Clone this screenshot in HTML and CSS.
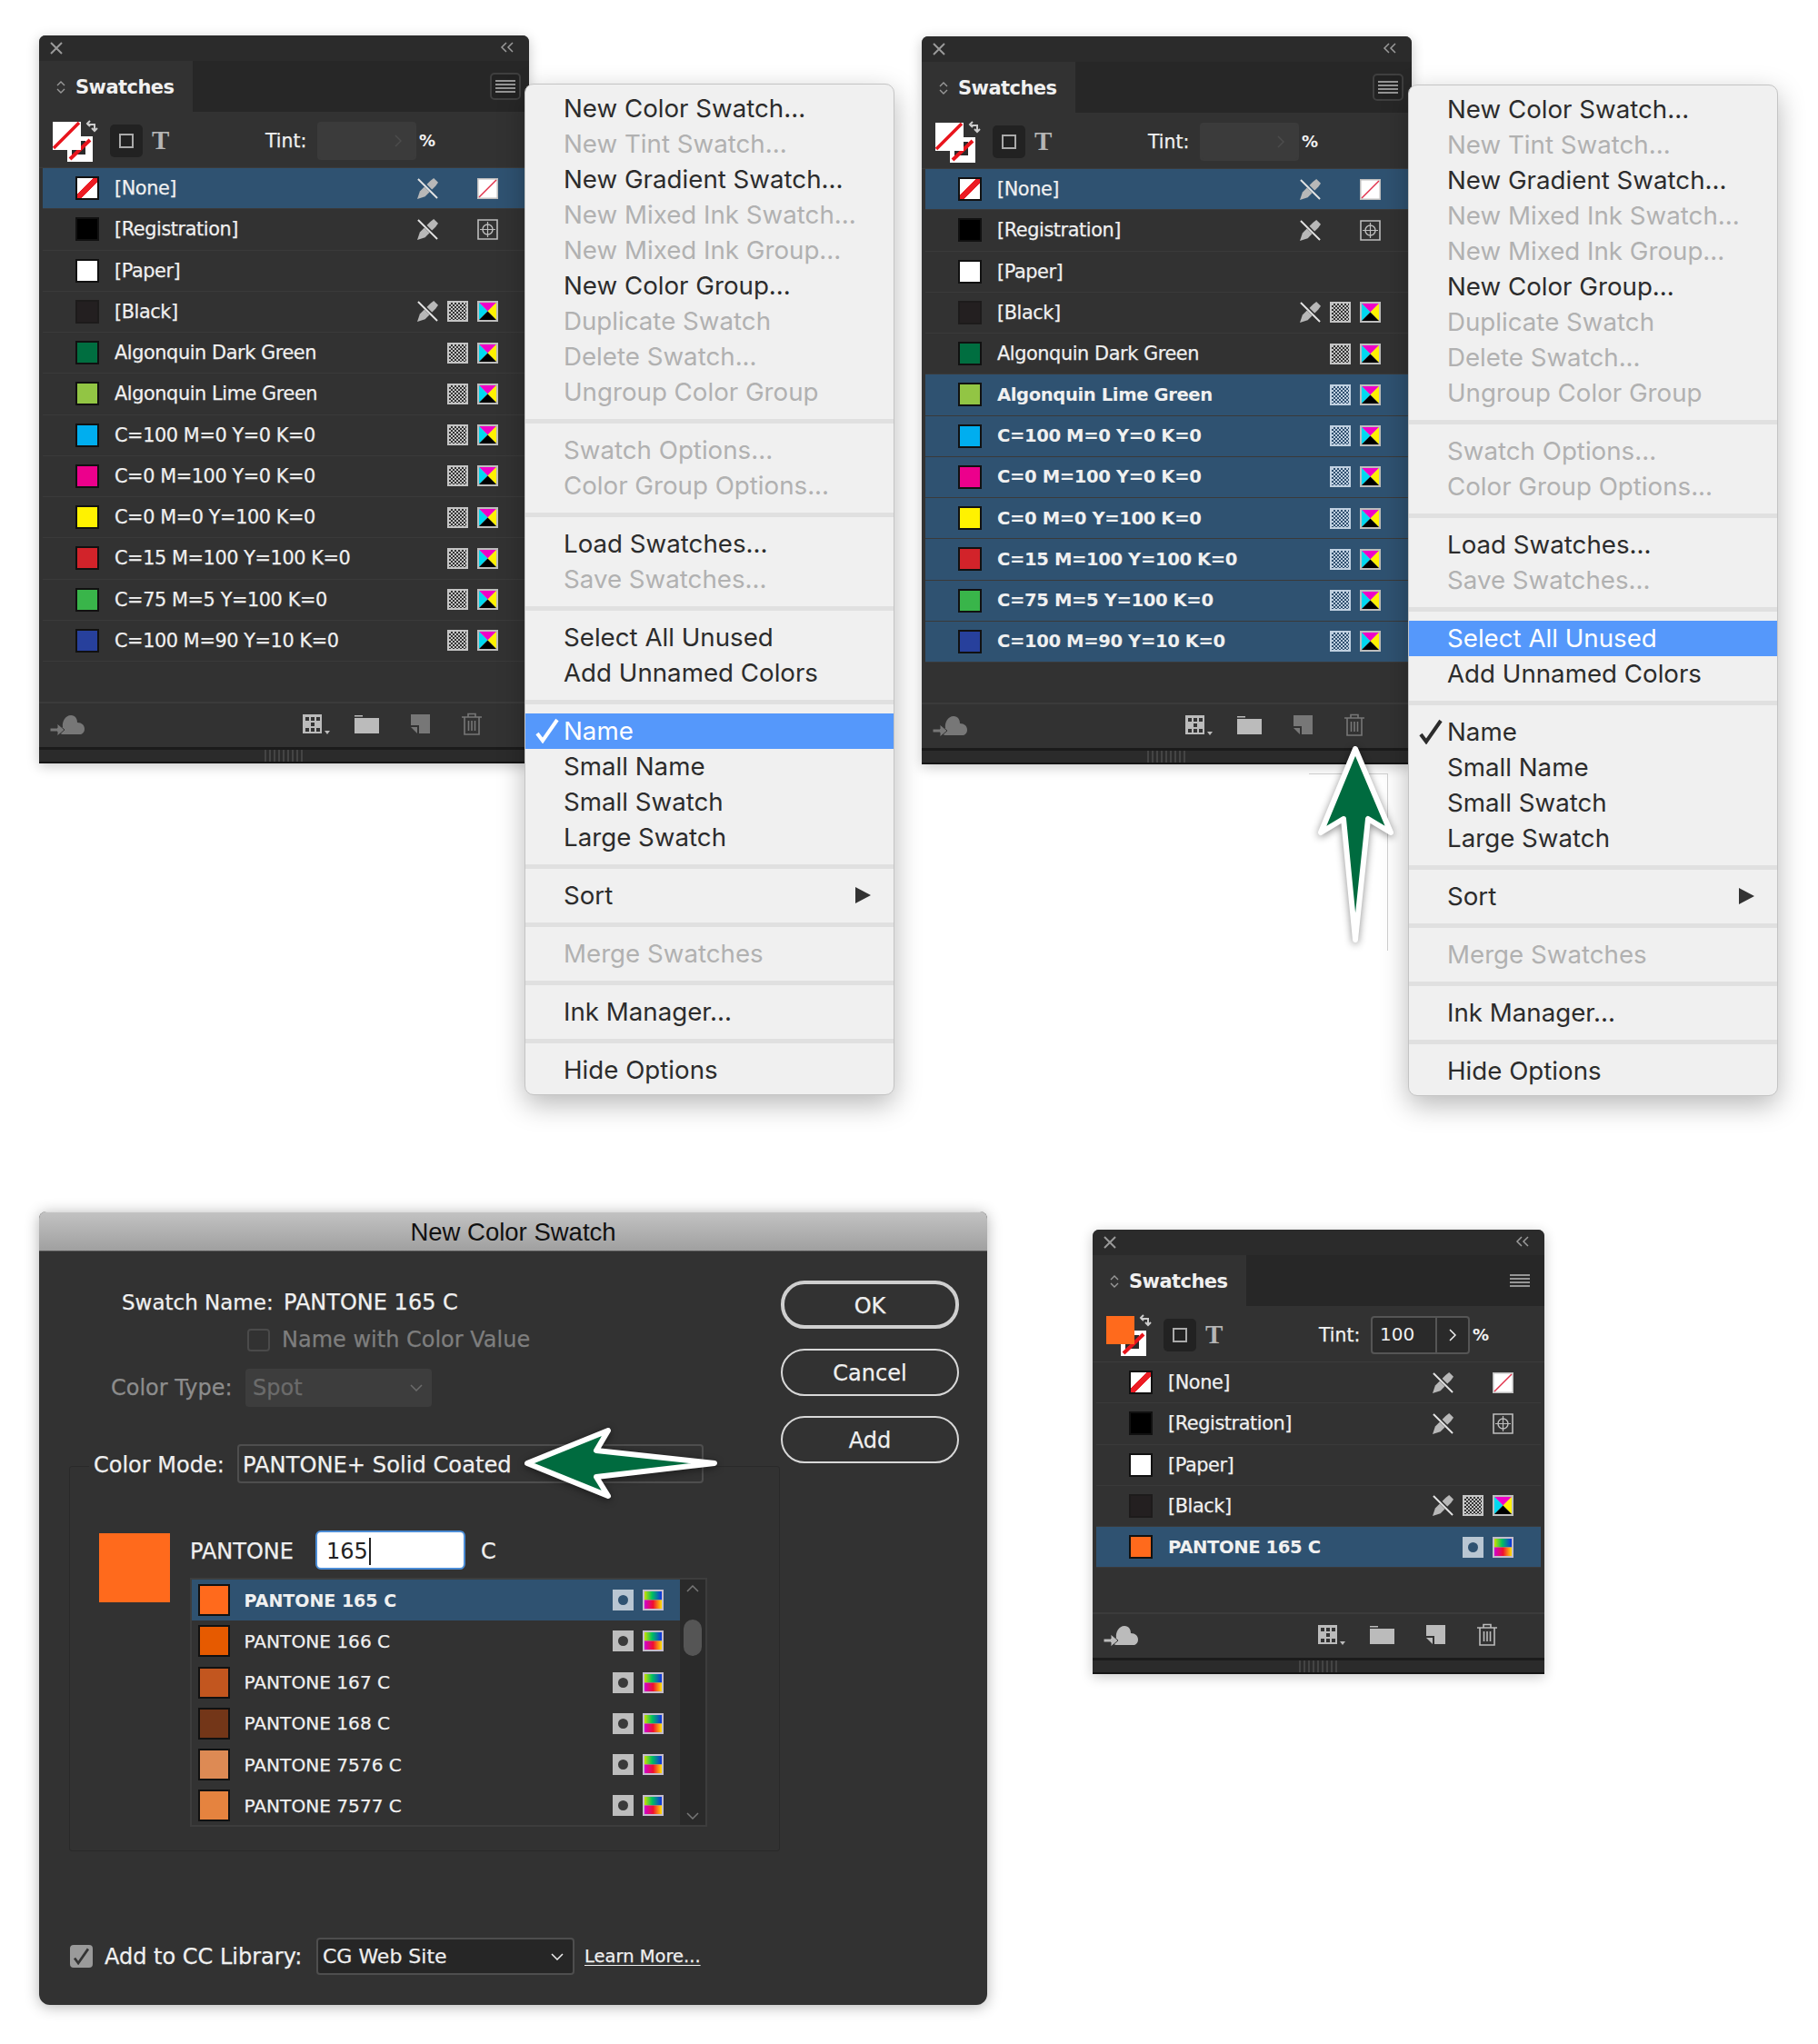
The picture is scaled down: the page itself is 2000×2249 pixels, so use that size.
FILE: index.html
```html
<!DOCTYPE html>
<html lang="en">
<head>
    <meta charset="UTF-8">
    <title>New Color Swatch</title>
    <link rel="stylesheet" href="styles.css">
</head>
<body>
<svg class="defs" xmlns="http://www.w3.org/2000/svg">
    <defs>
        <linearGradient id="rb-top"><stop offset="0" stop-color="#c8e000"/><stop offset=".45" stop-color="#00c060"/><stop offset="1" stop-color="#1030e0"/></linearGradient>
        <linearGradient id="rb-bot"><stop offset="0" stop-color="#d000d0"/><stop offset=".5" stop-color="#f01030"/><stop offset="1" stop-color="#ffe000"/></linearGradient>
    </defs>
    <symbol id="close" viewBox="0 0 14 14"><path d="M1 1l12 12M13 1L1 13" stroke="currentColor" stroke-width="2" fill="none"/></symbol>
    <symbol id="collapse" viewBox="0 0 16 12"><path d="M7 1L2 6l5 5M14 1L9 6l5 5" stroke="currentColor" stroke-width="1.5" fill="none"/></symbol>
    <symbol id="updown" viewBox="0 0 12 16"><path d="M2 6l4-4 4 4M2 10l4 4 4-4" stroke="currentColor" stroke-width="1.4" fill="none"/></symbol>
    <symbol id="burger" viewBox="0 0 22 14"><path d="M0 1h22M0 5h22M0 9h22M0 13h22" stroke="currentColor" stroke-width="1.5"/></symbol>
    <symbol id="pair" viewBox="0 0 50 46">
        <rect x="16" y="18" width="28" height="28" fill="#fff"/>
        <rect x="21" y="23" width="15" height="15" fill="#2b2b2b"/>
        <path d="M19 43L41 22" stroke="#e8141c" stroke-width="4"/>
        <rect x="0" y="2" width="31" height="31" fill="var(--front, #fff)"/>
        <path d="M1 31L29 3" stroke="var(--slash, #e8141c)" stroke-width="3.5"/>
        <path d="M38 5h8v6M43 9l3 3 3-3M41 1l-3 3 3 3" stroke="#ccc" stroke-width="2" fill="none"/>
    </symbol>
    <symbol id="pencil" viewBox="0 0 24 24">
        <path d="M0 24l3-9L15 3l4-3 5 5-3 4L9 21z" fill="#b8b8b8"/>
        <path d="M1 0l23 23" stroke="var(--row-bg, #323232)" stroke-width="4"/>
        <path d="M1 1l22 22" stroke="#e4e4e4" stroke-width="2"/>
    </symbol>
    <symbol id="nonecolor" viewBox="0 0 23 23">
        <rect width="23" height="23" fill="#bdbdbd"/><rect x="1.5" y="1.5" width="20" height="20" fill="#fff"/>
        <path d="M2 21L21 2" stroke="#e0304a" stroke-width="1.4"/>
    </symbol>
    <symbol id="reg" viewBox="0 0 23 23">
        <path d="M1 1h21v21H1z" fill="none" stroke="#bdbdbd" stroke-width="1.6"/>
        <circle cx="11.5" cy="11.5" r="5.5" fill="none" stroke="#bdbdbd" stroke-width="1.4"/>
        <path d="M11.5 3v17M3 11.5h17" stroke="#bdbdbd" stroke-width="1.2"/>
    </symbol>
    <symbol id="cmyk" viewBox="0 0 23 23">
        <rect width="23" height="23" fill="#bdbdbd"/>
        <path d="M2 2h19l-9.500 9.500z" fill="#f000c8"/>
        <path d="M2 2v19l9.500-9.500z" fill="#00d8f0"/>
        <path d="M21 2v19l-9.500-9.500z" fill="#fff000"/>
        <path d="M2 21h19l-9.500-9.500z" fill="#000"/>
    </symbol>
    <symbol id="spot" viewBox="0 0 23 23">
        <rect width="23" height="23" fill="var(--spot-bg, #bdbdbd)"/>
        <circle cx="11.500" cy="11.500" r="5.500" fill="var(--spot-dot, #3a3a3a)"/>
    </symbol>
    <symbol id="rainbow" viewBox="0 0 23 23">
        <rect width="23" height="23" fill="#c4bccc"/>
        <rect x="2" y="2" width="19" height="9.500" fill="url(#rb-top)"/>
        <rect x="2" y="11.500" width="19" height="9.500" fill="url(#rb-bot)"/>
    </symbol>
    <symbol id="cloud" viewBox="0 0 38 24">
        <path d="M14 22C10 22 10 15 14 14 13 8 17 1 23 1 28 1 30 5 30 9 35 9 38 12 38 16 38 20 35 22 33 22Z" fill="currentColor"/>
        <path d="M0 15h8v-5l8 7-8 7v-5H0z" fill="currentColor" stroke="#323232" stroke-width="1"/>
    </symbol>
    <symbol id="grid" viewBox="0 0 30 22">
        <rect width="21" height="21" fill="currentColor"/>
        <path d="M3 3h4v4H3zM9 3h4v4H9zM15 3h4v4h-4zM9 9h4v4H9zM3 15h4v4H3zM9 15h4v4H9zM15 15h4v4h-4z" fill="#333"/>
        <path d="M24 18h6l-3 4z" fill="currentColor"/>
    </symbol>
    <symbol id="folder" viewBox="0 0 27 21"><path d="M0 1h9v1.500H0zM0 4h27v17H0z" fill="currentColor"/></symbol>
    <symbol id="newswatch" viewBox="0 0 21 21"><path d="M0 0h21v21H9V12H0z" fill="currentColor"/><path d="M0 14h7v7z" fill="currentColor"/></symbol>
    <symbol id="trash" viewBox="0 0 22 25">
        <path d="M0 5h22M7 5V1.500h8V5M3 5v19h16V5M7.500 9v11M11 9v11M14.500 9v11" stroke="currentColor" stroke-width="1.600" fill="none"/>
    </symbol>
    <symbol id="check" viewBox="0 0 26 28"><path d="M2 17l6 8L24 2" stroke="currentColor" stroke-width="4" fill="none"/></symbol>
    <symbol id="chev" viewBox="0 0 14 8"><path d="M1 1l6 6 6-6" stroke="currentColor" stroke-width="1.500" fill="none"/></symbol>
    <symbol id="chevr" viewBox="0 0 8 14"><path d="M1 1l6 6-6 6" stroke="currentColor" stroke-width="1.500" fill="none"/></symbol>
</svg>

<div class="canvas">

    <!-- first panel + menu -->
    <section class="panel panel-a">
        <div class="titlebar"><svg class="ic-close"><use href="#close"/></svg><svg class="ic-collapse"><use href="#collapse"/></svg></div>
        <div class="tabs">
            <div class="tab"><svg class="ic-updown"><use href="#updown"/></svg>Swatches</div>
            <div class="menu-btn boxed"><svg class="ic-burger"><use href="#burger"/></svg></div>
        </div>
        <div class="controls">
            <svg class="pair"><use href="#pair"/></svg>
            <div class="frame-btn"><i></i></div>
            <span class="type-t">T</span>
            <span class="tint-label">Tint:</span>
            <div class="tint-field off"><span class="tint-val"></span><span class="tint-step"><svg class="ic-chevr"><use href="#chevr"/></svg></span></div>
            <span class="pct">%</span>
        </div>
        <div class="rows">
            <div class="row sel"><span class="chip c-none"></span><span class="name">[None]</span><span class="icons"><svg class="ic"><use href="#pencil"/></svg><i class="ic"></i><svg class="ic"><use href="#nonecolor"/></svg></span></div>
            <div class="row"><span class="chip c-reg"></span><span class="name">[Registration]</span><span class="icons"><svg class="ic"><use href="#pencil"/></svg><i class="ic"></i><svg class="ic"><use href="#reg"/></svg></span></div>
            <div class="row"><span class="chip c-paper"></span><span class="name">[Paper]</span><span class="icons"></span></div>
            <div class="row"><span class="chip c-black"></span><span class="name">[Black]</span><span class="icons"><svg class="ic"><use href="#pencil"/></svg><i class="ic dither"></i><svg class="ic"><use href="#cmyk"/></svg></span></div>
            <div class="row"><span class="chip c-dark"></span><span class="name">Algonquin Dark Green</span><span class="icons"><i class="ic dither"></i><svg class="ic"><use href="#cmyk"/></svg></span></div>
            <div class="row"><span class="chip c-lime"></span><span class="name">Algonquin Lime Green</span><span class="icons"><i class="ic dither"></i><svg class="ic"><use href="#cmyk"/></svg></span></div>
            <div class="row"><span class="chip c-cyan"></span><span class="name">C=100 M=0 Y=0 K=0</span><span class="icons"><i class="ic dither"></i><svg class="ic"><use href="#cmyk"/></svg></span></div>
            <div class="row"><span class="chip c-mag"></span><span class="name">C=0 M=100 Y=0 K=0</span><span class="icons"><i class="ic dither"></i><svg class="ic"><use href="#cmyk"/></svg></span></div>
            <div class="row"><span class="chip c-yel"></span><span class="name">C=0 M=0 Y=100 K=0</span><span class="icons"><i class="ic dither"></i><svg class="ic"><use href="#cmyk"/></svg></span></div>
            <div class="row"><span class="chip c-red"></span><span class="name">C=15 M=100 Y=100 K=0</span><span class="icons"><i class="ic dither"></i><svg class="ic"><use href="#cmyk"/></svg></span></div>
            <div class="row"><span class="chip c-green"></span><span class="name">C=75 M=5 Y=100 K=0</span><span class="icons"><i class="ic dither"></i><svg class="ic"><use href="#cmyk"/></svg></span></div>
            <div class="row"><span class="chip c-blue"></span><span class="name">C=100 M=90 Y=10 K=0</span><span class="icons"><i class="ic dither"></i><svg class="ic"><use href="#cmyk"/></svg></span></div>
        </div>
        <div class="foot">
            <svg class="f-cloud dim"><use href="#cloud"/></svg>
            <svg class="f-grid"><use href="#grid"/></svg>
            <svg class="f-folder"><use href="#folder"/></svg>
            <svg class="f-new dim"><use href="#newswatch"/></svg>
            <svg class="f-trash dim"><use href="#trash"/></svg>
        </div>
        <div class="grip"><i></i></div>
    </section>

    <nav class="menu menu-a">
        <div class="item">New Color Swatch...</div>
        <div class="item off">New Tint Swatch...</div>
        <div class="item">New Gradient Swatch...</div>
        <div class="item off">New Mixed Ink Swatch...</div>
        <div class="item off">New Mixed Ink Group...</div>
        <div class="item">New Color Group...</div>
        <div class="item off">Duplicate Swatch</div>
        <div class="item off">Delete Swatch...</div>
        <div class="item off">Ungroup Color Group</div>
        <hr>
        <div class="item off">Swatch Options...</div>
        <div class="item off">Color Group Options...</div>
        <hr>
        <div class="item">Load Swatches...</div>
        <div class="item off">Save Swatches...</div>
        <hr>
        <div class="item">Select All Unused</div>
        <div class="item">Add Unnamed Colors</div>
        <hr>
        <div class="item hot"><svg class="tick"><use href="#check"/></svg>Name</div>
        <div class="item">Small Name</div>
        <div class="item">Small Swatch</div>
        <div class="item">Large Swatch</div>
        <hr>
        <div class="item">Sort<i class="sub"></i></div>
        <hr>
        <div class="item off">Merge Swatches</div>
        <hr>
        <div class="item">Ink Manager...</div>
        <hr>
        <div class="item">Hide Options</div>
    </nav>

    <!-- second panel + menu -->
    <section class="panel panel-b">
        <div class="titlebar"><svg class="ic-close"><use href="#close"/></svg><svg class="ic-collapse"><use href="#collapse"/></svg></div>
        <div class="tabs">
            <div class="tab"><svg class="ic-updown"><use href="#updown"/></svg>Swatches</div>
            <div class="menu-btn boxed"><svg class="ic-burger"><use href="#burger"/></svg></div>
        </div>
        <div class="controls">
            <svg class="pair"><use href="#pair"/></svg>
            <div class="frame-btn"><i></i></div>
            <span class="type-t">T</span>
            <span class="tint-label">Tint:</span>
            <div class="tint-field off"><span class="tint-val"></span><span class="tint-step"><svg class="ic-chevr"><use href="#chevr"/></svg></span></div>
            <span class="pct">%</span>
        </div>
        <div class="rows">
            <div class="row sel"><span class="chip c-none"></span><span class="name">[None]</span><span class="icons"><svg class="ic"><use href="#pencil"/></svg><i class="ic"></i><svg class="ic"><use href="#nonecolor"/></svg></span></div>
            <div class="row"><span class="chip c-reg"></span><span class="name">[Registration]</span><span class="icons"><svg class="ic"><use href="#pencil"/></svg><i class="ic"></i><svg class="ic"><use href="#reg"/></svg></span></div>
            <div class="row"><span class="chip c-paper"></span><span class="name">[Paper]</span><span class="icons"></span></div>
            <div class="row"><span class="chip c-black"></span><span class="name">[Black]</span><span class="icons"><svg class="ic"><use href="#pencil"/></svg><i class="ic dither"></i><svg class="ic"><use href="#cmyk"/></svg></span></div>
            <div class="row"><span class="chip c-dark"></span><span class="name">Algonquin Dark Green</span><span class="icons"><i class="ic dither"></i><svg class="ic"><use href="#cmyk"/></svg></span></div>
            <div class="row sel strong"><span class="chip c-lime"></span><span class="name">Algonquin Lime Green</span><span class="icons"><i class="ic dither"></i><svg class="ic"><use href="#cmyk"/></svg></span></div>
            <div class="row sel strong"><span class="chip c-cyan"></span><span class="name">C=100 M=0 Y=0 K=0</span><span class="icons"><i class="ic dither"></i><svg class="ic"><use href="#cmyk"/></svg></span></div>
            <div class="row sel strong"><span class="chip c-mag"></span><span class="name">C=0 M=100 Y=0 K=0</span><span class="icons"><i class="ic dither"></i><svg class="ic"><use href="#cmyk"/></svg></span></div>
            <div class="row sel strong"><span class="chip c-yel"></span><span class="name">C=0 M=0 Y=100 K=0</span><span class="icons"><i class="ic dither"></i><svg class="ic"><use href="#cmyk"/></svg></span></div>
            <div class="row sel strong"><span class="chip c-red"></span><span class="name">C=15 M=100 Y=100 K=0</span><span class="icons"><i class="ic dither"></i><svg class="ic"><use href="#cmyk"/></svg></span></div>
            <div class="row sel strong"><span class="chip c-green"></span><span class="name">C=75 M=5 Y=100 K=0</span><span class="icons"><i class="ic dither"></i><svg class="ic"><use href="#cmyk"/></svg></span></div>
            <div class="row sel strong"><span class="chip c-blue"></span><span class="name">C=100 M=90 Y=10 K=0</span><span class="icons"><i class="ic dither"></i><svg class="ic"><use href="#cmyk"/></svg></span></div>
        </div>
        <div class="foot">
            <svg class="f-cloud dim"><use href="#cloud"/></svg>
            <svg class="f-grid"><use href="#grid"/></svg>
            <svg class="f-folder"><use href="#folder"/></svg>
            <svg class="f-new dim"><use href="#newswatch"/></svg>
            <svg class="f-trash dim"><use href="#trash"/></svg>
        </div>
        <div class="grip"><i></i></div>
    </section>

    <nav class="menu menu-b">
        <div class="item">New Color Swatch...</div>
        <div class="item off">New Tint Swatch...</div>
        <div class="item">New Gradient Swatch...</div>
        <div class="item off">New Mixed Ink Swatch...</div>
        <div class="item off">New Mixed Ink Group...</div>
        <div class="item">New Color Group...</div>
        <div class="item off">Duplicate Swatch</div>
        <div class="item off">Delete Swatch...</div>
        <div class="item off">Ungroup Color Group</div>
        <hr>
        <div class="item off">Swatch Options...</div>
        <div class="item off">Color Group Options...</div>
        <hr>
        <div class="item">Load Swatches...</div>
        <div class="item off">Save Swatches...</div>
        <hr>
        <div class="item hot">Select All Unused</div>
        <div class="item">Add Unnamed Colors</div>
        <hr>
        <div class="item"><svg class="tick"><use href="#check"/></svg>Name</div>
        <div class="item">Small Name</div>
        <div class="item">Small Swatch</div>
        <div class="item">Large Swatch</div>
        <hr>
        <div class="item">Sort<i class="sub"></i></div>
        <hr>
        <div class="item off">Merge Swatches</div>
        <hr>
        <div class="item">Ink Manager...</div>
        <hr>
        <div class="item">Hide Options</div>
    </nav>

    <div class="ghost-frame"></div>
    <svg class="arrow arrow-up" viewBox="0 0 90 226"><path d="M45 6L84 98 59 83 45 216 32 83 7 98Z"/></svg>

    <!-- dialog -->
    <section class="dialog">
        <div class="dlg-title">New Color Swatch</div>
        <div class="dlg-body">
            <div class="dlg-left">
                <div class="line line-name"><span class="lbl">Swatch Name:</span><span>PANTONE 165 C</span></div>
                <div class="line line-check"><i class="box"></i><span>Name with Color Value</span></div>
                <div class="line line-type"><span class="lbl">Color Type:</span><div class="select off"><span>Spot</span><svg class="ic-chev"><use href="#chev"/></svg></div></div>
                <div class="line line-mode"><span class="lbl">Color Mode:</span><div class="mode-field">PANTONE+ Solid Coated</div></div>
                <div class="group">
                    <div class="big-swatch"></div>
                    <div class="picker">
                        <div class="line pick-line"><span class="lbl">PANTONE</span><div class="num-input">165<i class="caret"></i></div><span class="suffix">C</span></div>
                        <div class="list">
                            <div class="list-rows">
                                <div class="lrow sel"><span class="lchip p165"></span><span class="name">PANTONE 165 C</span><svg class="ic"><use href="#spot"/></svg><svg class="ic"><use href="#rainbow"/></svg></div>
                                <div class="lrow"><span class="lchip p166"></span><span class="name">PANTONE 166 C</span><svg class="ic"><use href="#spot"/></svg><svg class="ic"><use href="#rainbow"/></svg></div>
                                <div class="lrow"><span class="lchip p167"></span><span class="name">PANTONE 167 C</span><svg class="ic"><use href="#spot"/></svg><svg class="ic"><use href="#rainbow"/></svg></div>
                                <div class="lrow"><span class="lchip p168"></span><span class="name">PANTONE 168 C</span><svg class="ic"><use href="#spot"/></svg><svg class="ic"><use href="#rainbow"/></svg></div>
                                <div class="lrow"><span class="lchip p7576"></span><span class="name">PANTONE 7576 C</span><svg class="ic"><use href="#spot"/></svg><svg class="ic"><use href="#rainbow"/></svg></div>
                                <div class="lrow"><span class="lchip p7577"></span><span class="name">PANTONE 7577 C</span><svg class="ic"><use href="#spot"/></svg><svg class="ic"><use href="#rainbow"/></svg></div>
                            </div>
                            <div class="scroll">
                                <svg class="sc-up"><use href="#chev"/></svg>
                                <i class="thumb"></i>
                                <svg class="sc-down"><use href="#chev"/></svg>
                            </div>
                        </div>
                    </div>
                </div>
                <div class="line line-cc">
                    <i class="box on"><svg><use href="#check"/></svg></i>
                    <span class="cc-label">Add to CC Library:</span>
                    <div class="select cc"><span>CG Web Site</span><svg class="ic-chev"><use href="#chev"/></svg></div>
                    <a class="learn">Learn More...</a>
                </div>
            </div>
            <div class="dlg-right">
                <div class="btn default">OK</div>
                <div class="btn">Cancel</div>
                <div class="btn">Add</div>
            </div>
        </div>
    </section>

    <svg class="arrow arrow-left" viewBox="0 0 220 84"><path d="M6 42L95 6 82 28 212 42 82 57 95 78Z"/></svg>

    <!-- small panel -->
    <section class="panel panel-c">
        <div class="titlebar"><svg class="ic-close"><use href="#close"/></svg><svg class="ic-collapse"><use href="#collapse"/></svg></div>
        <div class="tabs">
            <div class="tab"><svg class="ic-updown"><use href="#updown"/></svg>Swatches</div>
            <div class="menu-btn"><svg class="ic-burger"><use href="#burger"/></svg></div>
        </div>
        <div class="controls">
            <svg class="pair orange"><use href="#pair"/></svg>
            <div class="frame-btn"><i></i></div>
            <span class="type-t">T</span>
            <span class="tint-label">Tint:</span>
            <div class="tint-field"><span class="tint-val">100</span><span class="tint-step"><svg class="ic-chevr"><use href="#chevr"/></svg></span></div>
            <span class="pct">%</span>
        </div>
        <div class="rows">
            <div class="row"><span class="chip c-none"></span><span class="name">[None]</span><span class="icons"><svg class="ic"><use href="#pencil"/></svg><i class="ic"></i><svg class="ic"><use href="#nonecolor"/></svg></span></div>
            <div class="row"><span class="chip c-reg"></span><span class="name">[Registration]</span><span class="icons"><svg class="ic"><use href="#pencil"/></svg><i class="ic"></i><svg class="ic"><use href="#reg"/></svg></span></div>
            <div class="row"><span class="chip c-paper"></span><span class="name">[Paper]</span><span class="icons"></span></div>
            <div class="row"><span class="chip c-black"></span><span class="name">[Black]</span><span class="icons"><svg class="ic"><use href="#pencil"/></svg><i class="ic dither"></i><svg class="ic"><use href="#cmyk"/></svg></span></div>
            <div class="row sel strong"><span class="chip c-orange"></span><span class="name">PANTONE 165 C</span><span class="icons"><svg class="ic"><use href="#spot"/></svg><svg class="ic"><use href="#rainbow"/></svg></span></div>
        </div>
        <div class="foot">
            <svg class="f-cloud"><use href="#cloud"/></svg>
            <svg class="f-grid"><use href="#grid"/></svg>
            <svg class="f-folder"><use href="#folder"/></svg>
            <svg class="f-new"><use href="#newswatch"/></svg>
            <svg class="f-trash"><use href="#trash"/></svg>
        </div>
        <div class="grip"><i></i></div>
    </section>

</div>
</body>
</html>
```

FILE: styles.css
```css
* {
    box-sizing: border-box;
}
body {
    margin: 0;
    background: #fff;
    font-family: "DejaVu Sans", sans-serif;
    color: #f0f0f0;
}
svg {
    display: block;
}
.defs {
    position: absolute;
    width: 0;
    height: 0;
}
.canvas {
    position: relative;
    width: 2000px;
    height: 2249px;
    overflow: hidden;
}

/* panels */
.panel {
    position: absolute;
    display: flex;
    flex-direction: column;
    background: #323232;
    border-radius: 7px 7px 0 0;
    box-shadow: 0 3px 14px rgba(0, 0, 0, 0.22);
    overflow: hidden;
}
.panel-a { left: 43px; top: 39px; width: 539px; height: 801px; }
.panel-b { left: 1014px; top: 40px; width: 539px; height: 801px; }
.panel-c { left: 1202px; top: 1353px; width: 497px; height: 489px; }

.titlebar {
    height: 28px;
    flex: none;
    display: flex;
    align-items: center;
    justify-content: space-between;
    padding: 0 16px 0 12px;
    background: #2b2b2b;
    color: #9a9a9a;
}
.ic-close { width: 14px; height: 14px; }
.ic-collapse { width: 16px; height: 12px; margin-top: -2px; }

.tabs {
    height: 56px;
    flex: none;
    display: flex;
    justify-content: space-between;
    background: #272727;
}
.tab {
    width: 169px;
    display: flex;
    align-items: center;
    padding-left: 18px;
    padding-top: 2px;
    background: #323232;
    font-size: 21px;
    font-weight: 700;
    letter-spacing: -0.55px;
}
.ic-updown { width: 12px; height: 16px; margin-right: 10px; color: #999; }
.menu-btn {
    width: 34px;
    height: 30px;
    margin: 13px 9px 0 0;
    display: flex;
    align-items: center;
    justify-content: center;
    color: #bbb;
    border-radius: 5px;
    border: 2px solid transparent;
}
.menu-btn.boxed { border-color: #3f3f3f; background: #222; }
.ic-burger { width: 22px; height: 14px; }
.panel-c .menu-btn { margin-right: 10px; }

.controls {
    height: 61px;
    flex: none;
    display: flex;
    align-items: center;
    padding: 2px 0 0 15px;
}
.pair { width: 50px; height: 46px; }
.pair.orange { --front: #ff6a1c; --slash: transparent; }
.frame-btn {
    width: 36px;
    height: 36px;
    margin-left: 13px;
    display: flex;
    align-items: center;
    justify-content: center;
    background: #222;
    border-radius: 5px;
}
.frame-btn i { width: 16px; height: 16px; border: 2px solid #aaa; }
.type-t {
    width: 18px;
    margin-left: 10px;
    font: 700 29px "Liberation Serif", serif;
    color: #b5b5b5;
}
.tint-label {
    width: 46px;
    margin-left: 107px;
    font-size: 20.4px;
    -webkit-text-stroke: 0.25px;
}
.tint-field {
    width: 109px;
    height: 42px;
    margin-left: 11px;
    display: flex;
    background: #2a2a2a;
    border: 2px solid #555;
    border-radius: 4px;
    font-size: 20px;
}
.tint-field.off { background: #3b3b3b; border-color: #3b3b3b; color: #4c4c4c; }
.tint-val { flex: 1; padding: 6px 0 0 8px; }
.tint-step {
    width: 36px;
    display: flex;
    align-items: center;
    justify-content: center;
    border-left: 2px solid #555;
}
.tint-field.off .tint-step { border: 0; }
.ic-chevr { width: 8px; height: 14px; }
.pct { margin-left: 3px; font-size: 18px; font-weight: 700; }

.rows {
    flex: 1;
    border-top: 1px solid #3b3b3b;
    padding: 0 4px;
}
.row {
    --row-bg: #323232;
    height: 45.25px;
    display: flex;
    align-items: center;
    padding: 0 30px 0 36px;
    border-bottom: 1px solid #3a3a3a;
    font-size: 20.8px;
    letter-spacing: -0.4px;
    -webkit-text-stroke: 0.25px;
}
.row.sel {
    --row-bg: #2f5271;
    --spot-bg: #b9c6d2;
    --spot-dot: #2f5271;
    background: #2f5271;
    border-bottom-color: #3a3a3a;
}
.row.strong { font-size: 19.6px; -webkit-text-stroke: 0; }
.row.strong .name { font-weight: 700; }
.chip {
    width: 26px;
    height: 26px;
    flex: none;
    margin-right: 17px;
    border: 2px solid #111;
}
.c-none { background: linear-gradient(135deg, #fff 40%, #ec1c24 40%, #ec1c24 60%, #fff 60%); }
.c-reg { background: #000; }
.c-paper { background: #fff; }
.c-black { background: #231f20; border-color: #1d1b1b; }
.c-dark { background: #006e40; }
.c-lime { background: #92c544; }
.c-cyan { background: #00aeef; }
.c-mag { background: #ec008c; }
.c-yel { background: #fff200; }
.c-red { background: #d2232a; }
.c-green { background: #39b54a; }
.c-blue { background: #27409c; }
.c-orange { background: #ff6a1c; }
.name { flex: 1; white-space: nowrap; }
.icons {
    display: flex;
    gap: 10px;
    align-items: center;
}
.ic {
    width: 23px;
    height: 23px;
    flex: none;
    display: block;
}
.dither {
    background: repeating-conic-gradient(#333 0 25%, #c4c4c4 0 50%) 0 0 / 4px 4px;
    border: 2px solid #c4c4c4;
}
.row.sel .dither {
    background: repeating-conic-gradient(#2f4f6f 0 25%, #c0d0e0 0 50%) 0 0 / 4px 4px;
    border-color: #c0d0e0;
}

.foot {
    height: 50px;
    flex: none;
    position: relative;
    border-top: 2px solid #3b3b3b;
    color: #bbb;
}
.foot svg { position: absolute; top: 12px; }
.foot .dim { color: #777; }
.f-cloud { left: 12px; width: 38px; height: 24px; }
.f-grid { right: 219px; width: 30px; height: 22px; }
.f-folder { right: 165px; width: 27px; height: 21px; }
.f-new { right: 109px; width: 21px; height: 21px; }
.f-trash { right: 52px; width: 22px; height: 25px; top: 10px !important; }

.grip {
    height: 18px;
    flex: none;
    display: flex;
    justify-content: center;
    background: #2b2b2b;
    border-top: 3px solid #1b1b1b;
    border-bottom: 2px solid #151515;
}
.grip i {
    width: 44px;
    background: repeating-linear-gradient(90deg, #444 0 2px, transparent 2px 5px);
}

/* flyout menu */
.menu {
    position: absolute;
    width: 407px;
    height: 1113px;
    padding-top: 7px;
    background: #f0f0f0;
    border: 1px solid #c4c4c4;
    border-radius: 10px;
    box-shadow: 0 10px 30px rgba(0, 0, 0, 0.28);
    font-family: Inter, "Liberation Sans", sans-serif;
    font-size: 27.7px;
    color: #2c2c2c;
}
.menu-a { left: 577px; top: 92px; }
.menu-b { left: 1549px; top: 93px; }
.item {
    position: relative;
    height: 39px;
    line-height: 38px;
    padding-left: 42px;
    white-space: nowrap;
}
.item.off { color: #b1b1b1; }
.item.hot { background: #5598fb; color: #fff; }
.menu hr {
    height: 5px;
    margin: 10px 0;
    border: 0;
    background: #e0e0e0;
}
.tick {
    position: absolute;
    left: 11px;
    top: 5px;
    width: 26px;
    height: 28px;
}
.sub {
    position: absolute;
    right: 25px;
    top: 10px;
    border-left: 17px solid #333;
    border-top: 9px solid transparent;
    border-bottom: 9px solid transparent;
}

/* dialog */
.dialog {
    position: absolute;
    left: 43px;
    top: 1333px;
    width: 1043px;
    height: 873px;
    background: #323232;
    border-radius: 8px 8px 12px 12px;
    box-shadow: 0 2px 16px rgba(0, 0, 0, 0.3);
    overflow: hidden;
}
.dlg-title {
    height: 44px;
    background: linear-gradient(#c2c2c2, #a0a0a0);
    border-top: 1px solid #ddd;
    border-bottom: 1px solid #555;
    text-align: center;
    font: 27.5px/43px "Liberation Sans", sans-serif;
    color: #111;
}
.dlg-body {
    display: flex;
    justify-content: space-between;
    padding: 0 31px 0 33px;
    font-size: 24px;
    -webkit-text-stroke: 0.25px;
}
.dlg-left { width: 782px; }
.line { display: flex; align-items: center; white-space: nowrap; }
.line-name { height: 34px; margin-top: 39px; padding-left: 58px; }
.line-name .lbl { width: 178px; font-size: 23px; }
.line-check { height: 34px; margin-top: 7px; padding-left: 196px; color: #7e7e7e; }
.box {
    width: 25px;
    height: 25px;
    margin-right: 13px;
    border: 2px solid #4a4a4a;
    border-radius: 4px;
}
.box.on {
    background: #9a9a9a;
    border-color: #9a9a9a;
    color: #333;
    padding: 1px;
}
.box.on svg { width: 19px; height: 19px; }
.line-type { margin-top: 15px; padding-left: 46px; color: #8d8d8d; }
.line-type .lbl { width: 148px; }
.select {
    height: 42px;
    display: flex;
    align-items: center;
    justify-content: space-between;
    padding: 0 10px 0 8px;
    border-radius: 4px;
}
.select.off { width: 205px; background: #3d3d3d; color: #6b6b6b; }
.ic-chev { width: 14px; height: 8px; }
.line-mode {
    position: relative;
    margin-top: 41px;
    margin-bottom: -19px;
    padding-left: 22px;
}
.line-mode .lbl { width: 163px; padding: 3px 0 0 5px; background: #323232; }
.mode-field {
    width: 513px;
    height: 43px;
    line-height: 42px;
    padding-left: 4px;
    background: #323232;
    border: 2px solid #4e4e4e;
    border-radius: 4px;
    font-size: 24.2px;
}
.group {
    height: 424px;
    display: flex;
    align-items: flex-start;
    padding: 70px 0 0 32px;
    border: 1px solid #292929;
    border-radius: 3px;
}
.big-swatch {
    width: 78px;
    height: 76px;
    margin: 3px 22px 0 0;
    background: #ff6a1c;
}
.picker { width: 569px; }
.pick-line { height: 43px; }
.pick-line .lbl { width: 138px; padding-top: 2px; }
.num-input {
    width: 165px;
    height: 43px;
    display: flex;
    align-items: center;
    padding: 2px 0 0 10px;
    background: #fff;
    border: 2px solid #4c8dd6;
    border-radius: 6px;
    color: #222;
    -webkit-text-stroke: 0;
}
.caret { width: 2px; height: 30px; background: #222; margin-left: 1px; }
.suffix { margin-left: 17px; padding-top: 2px; }
.list {
    height: 274px;
    margin-top: 9px;
    display: flex;
    border: 2px solid #3d3d3d;
}
.list-rows { flex: 1; }
.lrow {
    --row-bg: #323232;
    height: 45.25px;
    display: flex;
    align-items: center;
    gap: 10.500px;
    padding: 0 18px 0 7px;
    font-size: 20.1px;
}
.lrow.sel {
    --spot-bg: #b9c6d2;
    --spot-dot: #2f5271;
    background: #2f5271;
    font-size: 19px;
    font-weight: 700;
    -webkit-text-stroke: 0;
}
.lrow .name { margin-left: 5px; }
.lchip {
    width: 35px;
    height: 35px;
    flex: none;
    border: 2px solid #111;
}
.p165 { background: #ff6a1c; }
.p166 { background: #e65a00; }
.p167 { background: #c2561f; }
.p168 { background: #733618; }
.p7576 { background: #dd8a54; }
.p7577 { background: #e5833f; }
.scroll {
    width: 28px;
    flex: none;
    display: flex;
    flex-direction: column;
    align-items: center;
    background: #2a2a2a;
    color: #777;
}
.sc-up { width: 14px; height: 8px; margin-top: 6px; transform: scaleY(-1); }
.sc-down { width: 14px; height: 8px; margin-top: auto; margin-bottom: 6px; }
.thumb {
    width: 20px;
    height: 40px;
    margin-top: 30px;
    background: #555;
    border-radius: 10px;
}
.line-cc { margin-top: 95px; padding-left: 1px; }
.cc-label { width: 233px; }
.select.cc {
    width: 284px;
    height: 41px;
    background: #262626;
    border: 2px solid #4e4e4e;
    color: #eee;
    padding-left: 5px;
    font-size: 22px;
}
.learn {
    margin-left: 11px;
    font-size: 19.5px;
    text-decoration: underline;
    text-underline-offset: 3px;
}
.dlg-right {
    width: 196px;
    padding-top: 32px;
    display: flex;
    flex-direction: column;
}
.btn {
    height: 52px;
    margin-bottom: 22px;
    display: flex;
    align-items: center;
    justify-content: center;
    border: 2px solid #d8d8d8;
    border-radius: 26px;
    padding-top: 2px;
}
.btn.default { border-width: 4px; border-color: #cfcfcf; height: 53px; }

/* callout arrows */
.arrow {
    position: absolute;
    filter: drop-shadow(0 2px 4px rgba(0, 0, 0, 0.45));
}
.arrow path {
    fill: #006b3f;
    stroke: #fff;
    stroke-width: 6;
    stroke-linejoin: round;
}
.arrow-up { left: 1446px; top: 818px; width: 90px; height: 226px; }
.arrow-left { left: 574px; top: 1568px; width: 220px; height: 84px; }
.ghost-frame {
    position: absolute;
    left: 1440px;
    top: 851px;
    width: 87px;
    height: 195px;
    border-top: 1px solid #ccc;
    border-right: 1px solid #ccc;
}
```
